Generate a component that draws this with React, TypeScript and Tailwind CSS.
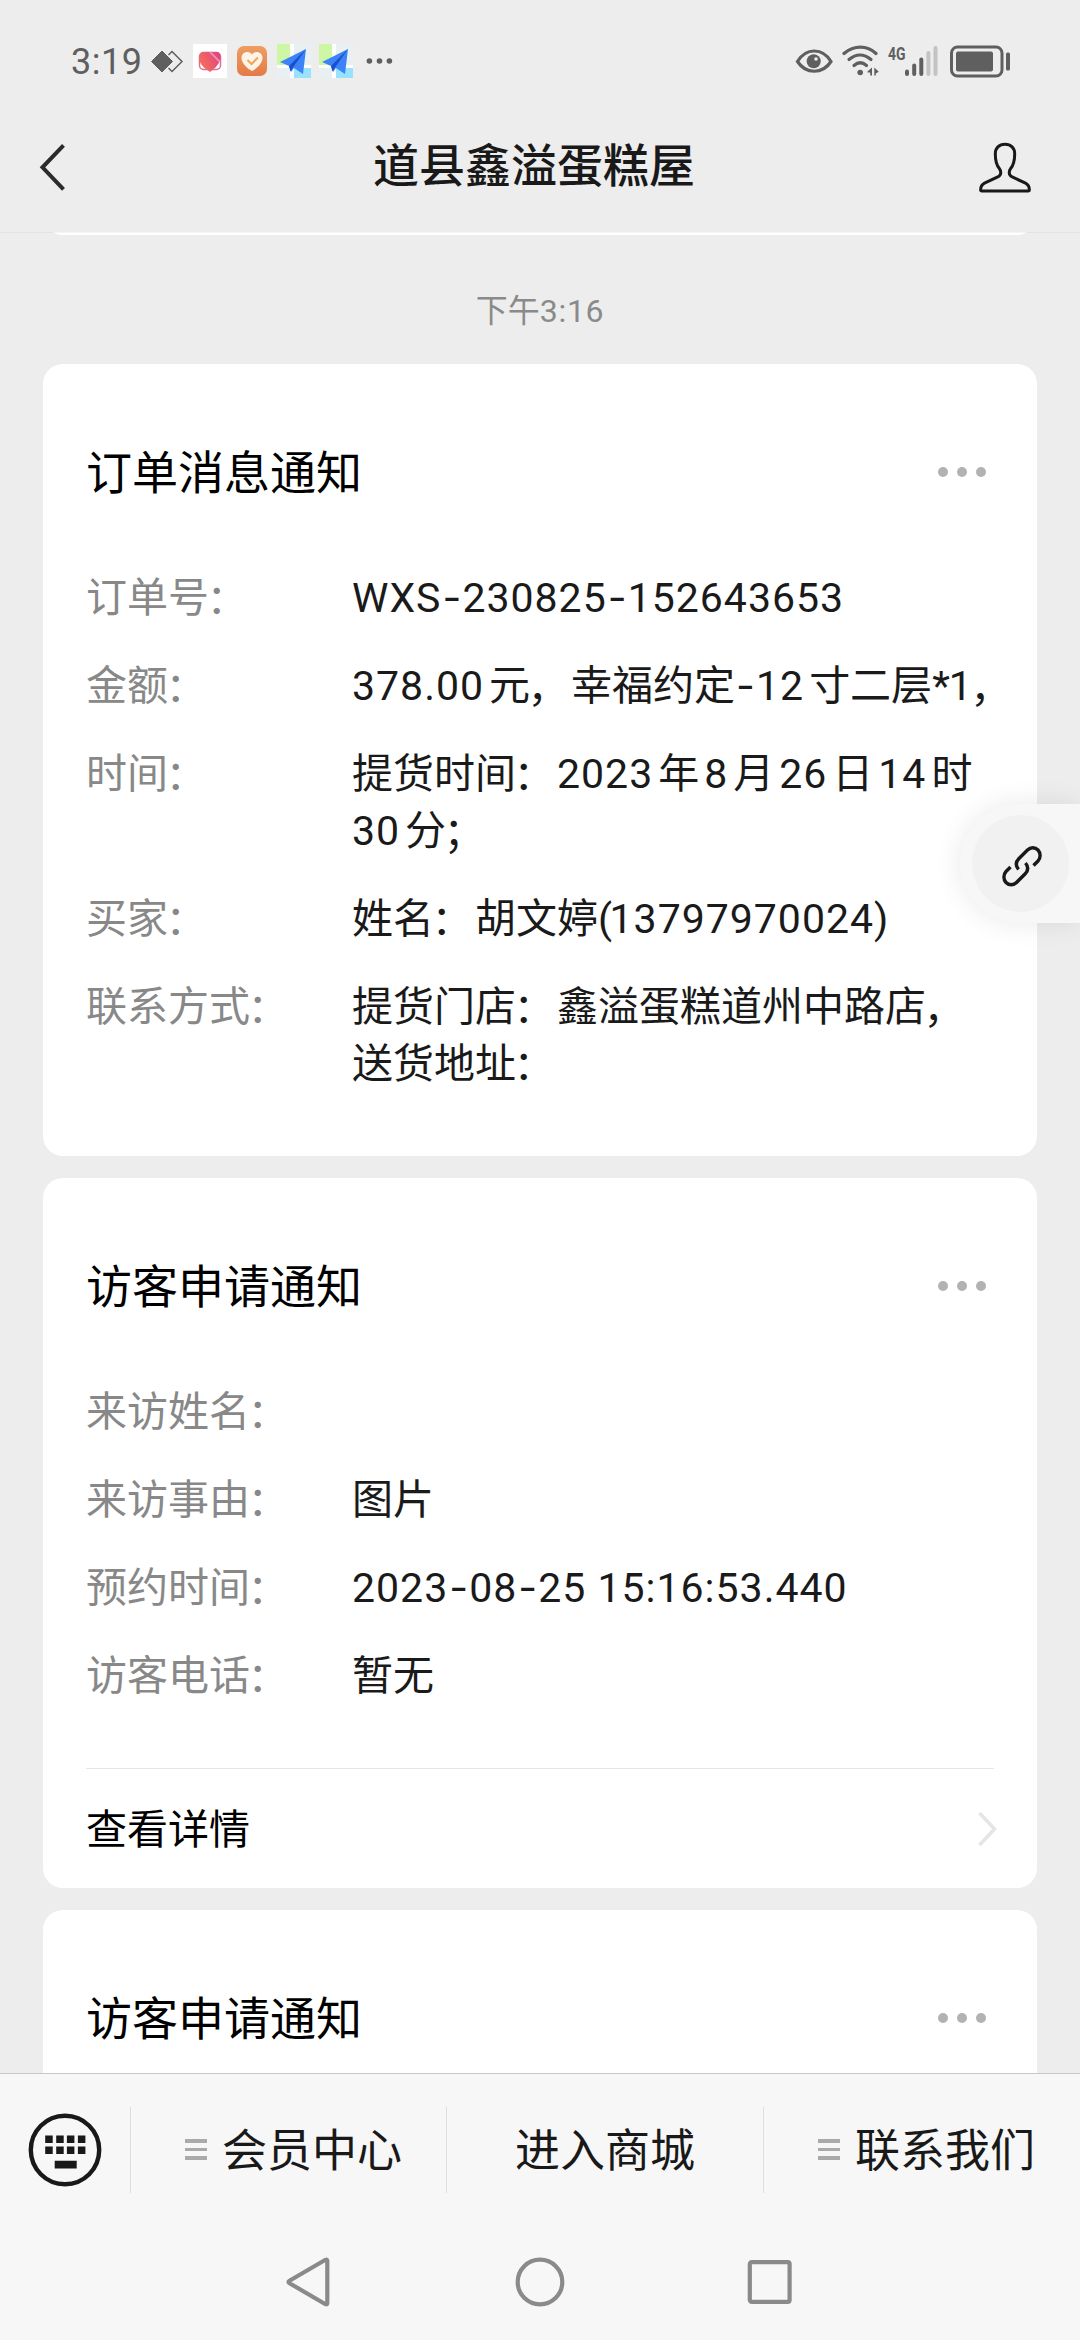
import { Fragment } from "react";

type Row = { label: string; lines: string[] };

const orderRows: Row[] = [
  { label: "订单号：", lines: ["WXS-230825-152643653"] },
  { label: "金额：", lines: ["378.00元，幸福约定-12寸二层*1，"] },
  { label: "时间：", lines: ["提货时间：2023年8月26日14时", "30分；"] },
  { label: "买家：", lines: ["姓名：胡文婷(13797970024)"] },
  { label: "联系方式：", lines: ["提货门店：鑫溢蛋糕道州中路店，", "送货地址："] },
];

const visitRows: Row[] = [
  { label: "来访姓名：", lines: [] },
  { label: "来访事由：", lines: ["图片"] },
  { label: "预约时间：", lines: ["2023-08-25 15:16:53.440"] },
  { label: "访客电话：", lines: ["暂无"] },
];

function Latin({ text }: { text: string }) {
  return (
    <>
      {text.split(/([-()*])/).map((s, i) => {
        if (s === "-") {
          return (
            <span key={i} className="inline-block w-[21px] text-center font-[Inter,sans-serif] leading-none tracking-normal">-</span>
          );
        }
        if (s === "(" || s === ")") return <span key={i} className="tracking-[-2.5px]">{s}</span>;
        if (s === "*") return <span key={i} className="tracking-[-1px]">{s}</span>;
        return s;
      })}
    </>
  );
}

// latin runs get their own font, plus a thin gap where a digit touches a hanzi
function Mixed({ text }: { text: string }) {
  const parts = text.split(/([\x20-\x7e]+|[：，；])/).filter(Boolean);
  return (
    <>
      {parts.map((p, i) => {
        if (/^[：，；]/.test(p)) return <span key={i} className="relative top-[2px] -ml-[2.5px] mr-[2.5px]">{p}</span>;
        if (!/^[\x20-\x7e]/.test(p)) return <Fragment key={i}>{p}</Fragment>;
        const before = i > 0 && /\p{Script=Han}$/u.test(parts[i - 1]) && /^\d/.test(p);
        const after = i < parts.length - 1 && /^\p{Script=Han}/u.test(parts[i + 1]) && /\d$/.test(p);
        return (
          <span
            key={i}
            className={`font-[Roboto,sans-serif] leading-none tracking-[1px] ${before ? "ml-[5px]" : ""} ${after ? "mr-[5px]" : ""}`}
          >
            <Latin text={p} />
          </span>
        );
      })}
    </>
  );
}

function MapIcon() {
  return (
    <svg width="34" height="34" viewBox="0 0 34 34">
      <rect width="34" height="34" fill="#e9f0f1" />
      <rect width="13" height="21" fill="#cdf7a4" />
      <path d="M13 0h4v34h-4zM0 21h34v3H0z" fill="#fff" />
      <rect x="17" y="24" width="17" height="10" fill="#98e2fd" />
      <path d="M3 18 29 5 26 30 17 24 14 28 12 22Z" fill="#3c83f7" />
      <path d="M29 5 12 22l1.500 5.500 2.500-4Z" fill="#1a4fd0" />
    </svg>
  );
}

function StatusBar() {
  return (
    <div className="flex h-[110px] items-start pl-[71px] pt-[44px] text-[#5f5f5f]">
      <span className="-mt-[4px] w-[79px] whitespace-nowrap font-[Roboto,sans-serif] text-[36px] leading-[44px] tracking-[0.5px]">3:19</span>
      <svg width="34" height="34" viewBox="0 0 34 34">
        <path d="M1.500 17.500 12 7l10.500 10.500L12 28Z" fill="currentColor" stroke="currentColor" strokeLinejoin="round" />
        <path d="m18.500 11 3.500-3.500 10 10-10 10-3.500-3.500" fill="none" stroke="currentColor" strokeWidth="1.500" />
      </svg>
      <svg className="ml-[9px]" width="34" height="34" viewBox="0 0 34 34">
        <defs>
          <linearGradient id="blob" x1="0" x2="1" y1="0.700" y2="0.200">
            <stop offset="0" stopColor="#f67257" />
            <stop offset="1" stopColor="#e0447f" />
          </linearGradient>
        </defs>
        <rect width="34" height="34" fill="#fff" />
        <rect x="6.500" y="8.500" width="21" height="17" rx="4" fill="none" stroke="#e46a93" strokeWidth="1.500" />
        <path d="M11 8h13q4 1 3.500 6.500-1 5-5 9L17 28l-6-4.500Q6 19 6 13q1-5 5-5Z" fill="url(#blob)" />
        <path d="m17 8 9.500 9.500" stroke="#f08cae" strokeWidth="1.800" fill="none" />
      </svg>
      <svg className="ml-[10px]" width="30" height="34" viewBox="0 0 30 34">
        <defs>
          <linearGradient id="heart" x1="0" x2="0" y1="0" y2="1">
            <stop offset="0" stopColor="#ee9e62" />
            <stop offset="1" stopColor="#e37a48" />
          </linearGradient>
        </defs>
        <rect y="2" width="30" height="30" rx="7" fill="url(#heart)" />
        <path d="M15 27C11 25 4.500 19.500 4.500 14 4.500 8 11.500 6 15 10.500 18.500 6 25.500 8 25.500 14c0 5.500-6.500 11-10.500 13Z" fill="#fdf3e6" />
        <path d="m10.500 16 4 4 6.500-6.500" fill="none" stroke="#eda65c" strokeWidth="2" />
      </svg>
      <div className="ml-[10px] flex gap-[8px]">
        <MapIcon />
        <MapIcon />
      </div>
      <svg className="ml-[13px]" width="28" height="34" viewBox="0 0 28 34" fill="currentColor">
        <circle cx="3.400" cy="17" r="2.800" />
        <circle cx="13.500" cy="17" r="2.800" />
        <circle cx="23.400" cy="17" r="2.800" />
      </svg>

      <svg className="ml-[401px]" width="38" height="34" viewBox="0 0 38 34">
        <path d="M2.500 17.500C11 3.500 27.500 3.500 36 17.500 27.500 30.500 11 30.500 2.500 17.500Z" fill="none" stroke="currentColor" strokeWidth="3.200" />
        <circle cx="18.700" cy="17.300" r="7" fill="currentColor" />
        <circle cx="21" cy="15" r="1.800" fill="#ededed" />
      </svg>
      <svg className="ml-[9px]" width="38" height="34" viewBox="0 0 38 34" fill="none" stroke="currentColor" strokeWidth="3.200" strokeLinecap="round">
        <path d="M2 9.500C12 1 25 1 34 9.500" />
        <path d="M7 15.500C14 9.500 22 9.500 29 15.500" />
        <path d="M12 21.500c4-3.500 8.500-3.500 12.500 0" />
        <circle cx="18.200" cy="28.500" r="2.800" fill="currentColor" stroke="none" />
        <path d="M25.500 27.500 30 23.500v8h-1.800V28.500h-2.700ZM32.300 23.500v8h1.500v-2l3-1.800Z" fill="currentColor" stroke="none" />
      </svg>
      <svg className="ml-[8px] overflow-visible" width="51" height="34" viewBox="0 0 51 34" fill="currentColor">
        <text x="0" y="15.500" className="font-[Roboto,sans-serif] text-[19px] font-bold" textLength="17.500" lengthAdjust="spacingAndGlyphs">4G</text>
        <rect x="17" y="25.500" width="4" height="6.500" rx="2" />
        <rect x="24.200" y="19.500" width="4" height="12.500" rx="2" />
        <rect x="31.300" y="13.500" width="4" height="18.500" rx="2" />
        <rect x="38.400" y="7" width="4" height="25" rx="2" fill="#c3c3c3" />
        <rect x="45.500" y="2" width="4" height="30" rx="2" fill="#c3c3c3" />
      </svg>
      <svg className="ml-[11px]" width="62" height="36" viewBox="0 0 62 36">
        <rect x="1.500" y="3" width="50.500" height="29" rx="6" fill="none" stroke="currentColor" strokeWidth="3" />
        <rect x="6" y="7.500" width="37" height="20" rx="2" fill="currentColor" />
        <rect x="56" y="8.500" width="4" height="18" rx="1.500" fill="currentColor" />
      </svg>
    </div>
  );
}

function Header() {
  return (
    <div className="flex h-[122px] items-start justify-between pl-[38px] pr-[48px] pt-[18px]">
      <svg className="mt-[14px]" width="30" height="50" viewBox="0 0 30 50" fill="none">
        <path d="M25.500 3.300 4.500 25.300l21 22" stroke="#2b2b2b" strokeWidth="4" />
      </svg>
      <h1 className="ml-[22px] text-[46px] font-medium leading-[68px] text-[#191919]">道县鑫溢蛋糕屋</h1>
      <svg className="mt-[14px]" width="54" height="52" viewBox="0 0 54 52" fill="none">
        <path
          d="M27 2.200c-6 0-9.700 4-9.700 9.500 0 6.500.7 10.800 4 14.800 1.800 2.300 2.400 6.500-1 8.200L6.500 41.200C3.500 42.700 2.600 45 2.600 48c0 .6.300.9.900.9h47c.6 0 .9-.3.900-.9 0-3-.9-5.300-3.900-6.800l-13.800-6.500c-3.400-1.700-2.800-5.900-1-8.200 3.300-4 4-8.300 4-14.800 0-5.500-3.700-9.500-9.700-9.500Z"
          stroke="#191919"
          strokeWidth="3"
        />
      </svg>
    </div>
  );
}

function Card({ title, rows, detail }: { title: string; rows: Row[]; detail?: boolean }) {
  return (
    <div className="rounded-[20px] bg-white pl-[43px] pr-[43px] pt-[74px]">
      <div className="flex h-[68px] items-center justify-between">
        <h2 className="-mt-[6px] text-[46px] leading-[68px] text-black">{title}</h2>
        <div className="mr-[8px] flex gap-[9px]">
          <i className="size-[10px] rounded-full bg-[#b2b2b2]" />
          <i className="size-[10px] rounded-full bg-[#b2b2b2]" />
          <i className="size-[10px] rounded-full bg-[#b2b2b2]" />
        </div>
      </div>
      <div className="flex flex-col gap-[31px] pb-[67px] pt-[60px] text-[41px] leading-[57px]">
        {rows.map((row) => (
          <div key={row.label} className="flex">
            <div className="w-[266px] shrink-0 text-[#888]">
              <Mixed text={row.label} />
            </div>
            <div className="whitespace-nowrap text-[#1a1a1a]">
              {row.lines.map((line) => (
                <div key={line} className="h-[57px]">
                  <Mixed text={line} />
                </div>
              ))}
            </div>
          </div>
        ))}
      </div>
      {detail && (
        <div className="flex h-[120px] items-center justify-between border-t border-[#e5e5e5] text-[41px] leading-[62px] text-black">
          <span className="-mt-[5px]">查看详情</span>
          <svg className="-mr-[3px]" width="20" height="36" viewBox="0 0 20 36" fill="none">
            <path d="m2.500 2 15 16-15 16" stroke="#e5e5e5" strokeWidth="3.500" />
          </svg>
        </div>
      )}
    </div>
  );
}

function MenuLines() {
  return (
    <div className="mr-[15px] flex w-[22px] flex-col gap-[5px]">
      <i className="h-[3.500px] bg-[#aaa]" />
      <i className="h-[3.500px] bg-[#aaa]" />
      <i className="h-[3.500px] bg-[#aaa]" />
    </div>
  );
}

function MenuBar() {
  return (
    <div className="flex h-[152px] items-center border-t border-[#c8c8c8] text-[45px] leading-[68px] text-[#191919]">
      <div className="flex w-[130px] justify-center">
        <svg width="74" height="74" viewBox="0 0 74 74" fill="#191919">
          <circle cx="37" cy="37" r="34.200" fill="none" stroke="#191919" strokeWidth="4.400" />
          <path d="M17.200 22.500h7.500v7.500h-7.500zM28.200 22.500h7.500v7.500h-7.500zM38.900 22.500h7.500v7.500h-7.500zM49.900 22.500h7.500v7.500h-7.500zM17.200 33.500h7.500v7.500h-7.500zM28.200 33.500h7.500v7.500h-7.500zM38.900 33.500h7.500v7.500h-7.500zM49.900 33.500h7.500v7.500h-7.500zM26.700 47.800h22v7.700h-22z" />
        </svg>
      </div>
      <div className="flex h-[86px] w-[316px] items-center border-l border-[#dedede] pl-[54px]">
        <MenuLines />
        <span className="-mt-[4px]">会员中心</span>
      </div>
      <div className="flex h-[86px] w-[317px] items-center justify-center border-l border-[#dedede]">
        <span className="-mt-[4px]">进入商城</span>
      </div>
      <div className="flex h-[86px] w-[317px] items-center border-l border-[#dedede] pl-[54px]">
        <MenuLines />
        <span className="-mt-[4px]">联系我们</span>
      </div>
    </div>
  );
}

function NavBar() {
  return (
    <div className="flex flex-1 items-start justify-center gap-[178px] pt-[31px]">
      <svg width="52" height="52" viewBox="0 0 52 52" fill="none" stroke="#8a8a8a" strokeWidth="4.200" strokeLinejoin="round">
        <path d="M41.500 3.800Q43.300 3 43.300 5v42q0 2-1.800 1.200L5.500 27.200q-2-1.200 0-2.400Z" />
      </svg>
      <svg width="52" height="52" viewBox="0 0 52 52" fill="none" stroke="#8a8a8a" strokeWidth="4.200">
        <circle cx="26" cy="26" r="22.300" />
      </svg>
      <svg width="52" height="52" viewBox="0 0 52 52" fill="none" stroke="#8a8a8a" strokeWidth="4.200">
        <rect x="5.800" y="6.100" width="39.800" height="39.800" rx="2" />
      </svg>
    </div>
  );
}

export default function App() {
  return (
    <div className="relative flex h-[2340px] w-[1080px] flex-col overflow-hidden bg-[#ededed] font-['Noto_Sans_CJK_SC',sans-serif]">
      <StatusBar />
      <Header />

      <div className="relative flex min-h-0 flex-1 flex-col overflow-hidden">
        {/* tail of the previous message, under the header line */}
        <div className="mx-[43px] h-[3px] shrink-0 overflow-hidden">
          <div className="-mt-[37px] h-[40px] rounded-[20px] bg-white" />
        </div>
        <div className="absolute inset-x-0 top-0 h-px bg-black/[0.04]" />
        <div className="mt-[49px] h-[48px] shrink-0 text-center text-[32px] leading-[48px] text-[#8a8a8a]">
          下午<span className="font-[Roboto,sans-serif] leading-none tracking-[0.7px]">3:16</span>
        </div>
        <div className="mx-[43px] mt-[32px] flex flex-col gap-[22px]">
          <Card title="订单消息通知" rows={orderRows} />
          <Card title="访客申请通知" rows={visitRows} detail />
          <Card title="访客申请通知" rows={[]} />
        </div>
      </div>

      <div className="flex h-[267px] shrink-0 flex-col bg-[#f7f7f7]">
        <MenuBar />
        <NavBar />
      </div>

      <div className="absolute right-0 top-[804px] flex h-[119px] w-[120px] items-center rounded-l-full bg-[#f7f7f7] pl-[12px] shadow-[0_0_28px_rgba(0,0,0,0.09)]">
        <div className="flex size-[97px] items-center justify-center rounded-full bg-[#f1f1f1]">
          <svg className="ml-[2px] mt-[4px]" width="44" height="44" viewBox="0 0 44 44" fill="none" stroke="#191919" strokeWidth="3.400">
            <path d="M33.500 21.500 38 17c2.800-3 2.800-8 0-11s-7.500-3-10.500 0L19 14.500c-3.500 3.500-3.300 7.500-.5 11" />
            <path d="M10.500 23 6 27.500c-2.800 3-2.800 8 0 11s7.500 3 10.500 0L25 30c3.500-3.500 3.300-7.500.5-11" />
          </svg>
        </div>
      </div>
    </div>
  );
}
